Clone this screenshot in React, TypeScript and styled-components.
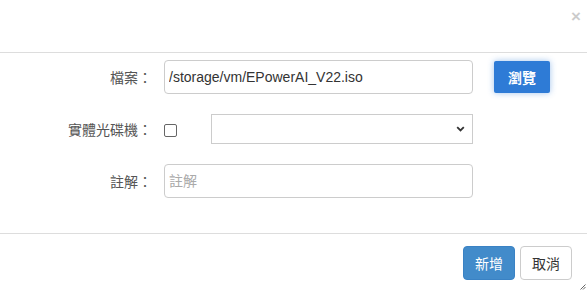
import React from 'react'
import styled, { createGlobalStyle } from 'styled-components'

const GlobalStyle = createGlobalStyle`
    html, body {
        margin: 0;
        padding: 0;
        background: #fff;
    }
    body {
        font-family: "Liberation Sans", "Noto Sans CJK TC", sans-serif;
        font-size: 14px;
        color: #333;
    }
`

const Modal = styled.div`
    width: 587px;
    height: 293px;
    position: relative;
    background: #fff;
    overflow: hidden;
`

const Header = styled.div`
    height: 52px;
    border-bottom: 1px solid #ddd;
    position: relative;
`

const Close = styled.button`
    position: absolute;
    top: 8px;
    right: 6px;
    border: 0;
    background: none;
    padding: 0;
    font-family: "Liberation Sans", sans-serif;
    font-size: 17px;
    font-weight: bold;
    line-height: 1;
    color: #000;
    opacity: 0.2;
    cursor: pointer;
`

const Body = styled.div`
    padding: 7px 0 35px;
    display: flex;
    flex-direction: column;
    gap: 20px;
`

const Row = styled.div`
    display: flex;
    align-items: center;
`

const Label = styled.label`
    width: 152px;
    flex: none;
    text-align: right;
    color: #555;
    font-size: 14px;
    margin-right: 12px;
`

const TextInput = styled.input`
    box-sizing: border-box;
    width: 309px;
    height: 34px;
    padding: 6px 4px;
    border: 1px solid #ccc;
    border-radius: 4px;
    font-family: "Liberation Sans", "Noto Sans CJK TC", sans-serif;
    font-size: 14px;
    color: #333;
    outline: none;
    &::placeholder {
        color: #aaa;
    }
`

const BrowseButton = styled.button`
    margin-left: 21px;
    width: 56px;
    height: 32px;
    border: 0;
    border-radius: 2px;
    background: #2e7bd6;
    color: #fff;
    font-family: "Noto Sans CJK TC", sans-serif;
    font-weight: bold;
    font-size: 14px;
    box-shadow: 0 0 6px rgba(46, 123, 214, 0.45);
`

const Check = styled.span`
    box-sizing: border-box;
    width: 13px;
    height: 13px;
    margin: 2px 34px 0 0;
    border: 1px solid #666;
    border-radius: 2px;
    background: #fff;
    flex: none;
`

const SelectWrap = styled.div`
    position: relative;
    width: 262px;
    height: 30px;
`

const Select = styled.select`
    box-sizing: border-box;
    width: 100%;
    height: 100%;
    border: 1px solid #ccc;
    border-radius: 0;
    background: #fff;
    appearance: none;
    outline: none;
`

const Chevron = styled.svg`
    position: absolute;
    right: 8px;
    top: 12px;
    pointer-events: none;
`

const Footer = styled.div`
    border-top: 1px solid #ddd;
    padding: 12px 15px 0;
    display: flex;
    justify-content: flex-end;
    gap: 5px;
`

const FooterButton = styled.button<{ $primary?: boolean }>`
    box-sizing: border-box;
    width: 52px;
    height: 34px;
    border-radius: 4px;
    border: 1px solid ${p => (p.$primary ? '#3a82c4' : '#ccc')};
    background: ${p => (p.$primary ? '#428bca' : '#fff')};
    color: ${p => (p.$primary ? '#fff' : '#333')};
    font-family: "Noto Sans CJK TC", sans-serif;
    font-size: 14px;
`

const Grip = styled.svg`
    position: absolute;
    right: 1px;
    bottom: 3px;
`

export default function App() {
    return (
        <>
            <GlobalStyle />
            <Modal>
                <Header>
                    <Close>×</Close>
                </Header>
                <Body>
                    <Row>
                        <Label>檔案：</Label>
                        <TextInput defaultValue="/storage/vm/EPowerAI_V22.iso" />
                        <BrowseButton>瀏覽</BrowseButton>
                    </Row>
                    <Row>
                        <Label>實體光碟機：</Label>
                        <Check />
                        <SelectWrap>
                            <Select />
                            <Chevron width="9" height="6" viewBox="0 0 9 6">
                                <path d="M1.2 1.2 L4.5 4.5 L7.8 1.2" fill="none" stroke="#333" strokeWidth="1.8" />
                            </Chevron>
                        </SelectWrap>
                    </Row>
                    <Row>
                        <Label>註解：</Label>
                        <TextInput placeholder="註解" />
                    </Row>
                </Body>
                <Footer>
                    <FooterButton $primary>新增</FooterButton>
                    <FooterButton>取消</FooterButton>
                </Footer>
                <Grip width="6" height="6" viewBox="0 0 6 6">
                    <path d="M0.5 5.5 L5.5 0.5 M3 5.5 L5.5 3" stroke="#666" strokeWidth="1" />
                </Grip>
            </Modal>
        </>
    )
}
